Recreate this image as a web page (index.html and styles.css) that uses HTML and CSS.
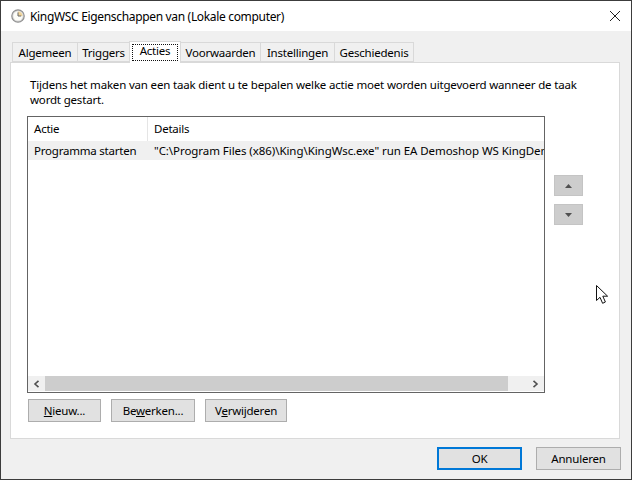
FILE: index.html
```html
<!DOCTYPE html>
<html lang="nl">
<head>
<meta charset="utf-8">
<title>KingWSC Eigenschappen</title>
<link rel="stylesheet" href="styles.css">
</head>
<body>
<div class="window">
  <header class="titlebar">
    <svg class="clock" width="14" height="14" viewBox="0 0 14 14"><circle cx="7" cy="7" r="6.2" fill="#dcdcdc" stroke="#8f8f8f" stroke-width="1.2"/><circle cx="7" cy="7" r="4.6" fill="#fdfdf8"/><path d="M7 2.4A4.6 4.6 0 0 1 11.6 7H7Z" fill="#f0d49a"/><path d="M7 3.4V7h3.2" fill="none" stroke="#666" stroke-width="1"/></svg>
    <span class="title">KingWSC Eigenschappen van (Lokale computer)</span>
    <svg class="close" width="10" height="10" viewBox="0 0 10 10"><path d="M0 0L10 10M10 0L0 10" stroke="#222" stroke-width="1" fill="none"/></svg>
  </header>
  <main class="content">
    <nav class="tabs">
      <span class="tab t1">Algemeen</span>
      <span class="tab t2">Triggers</span>
      <span class="tab active t3"><span class="focus">Acties</span></span>
      <span class="tab t4">Voorwaarden</span>
      <span class="tab t5">Instellingen</span>
      <span class="tab t6">Geschiedenis</span>
    </nav>
    <section class="panel">
      <p class="intro">Tijdens het maken van een taak dient u te bepalen welke actie moet worden uitgevoerd wanneer de taak wordt gestart.</p>
      <div class="listrow">
        <div class="list">
          <div class="listhead">
            <span class="col1">Actie</span>
            <span class="col2">Details</span>
          </div>
          <div class="listitem">
            <span class="col1">Programma starten</span>
            <span class="col2 path">"C:\Program Files (x86)\King\KingWsc.exe" run EA Demoshop WS KingDemo</span>
          </div>
          <div class="listfill"></div>
          <div class="hscroll">
            <span class="arrow"><svg width="7" height="8" viewBox="0 0 7 8"><path d="M5.5 .8L2 4l3.5 3.2" fill="none" stroke="#505050" stroke-width="1.6"/></svg></span>
            <span class="thumb"></span>
            <span class="arrow end"><svg width="7" height="8" viewBox="0 0 7 8"><path d="M1.5 .8L5 4L1.5 7.2" fill="none" stroke="#505050" stroke-width="1.6"/></svg></span>
          </div>
        </div>
        <div class="updown">
          <button class="btn small"><svg width="7" height="4" viewBox="0 0 7 4"><path d="M3.5 0L7 4H0Z" fill="#505050"/></svg></button>
          <button class="btn small"><svg width="7" height="4" viewBox="0 0 7 4"><path d="M0 0H7L3.5 4Z" fill="#505050"/></svg></button>
        </div>
      </div>
      <div class="actions">
        <button class="btn b1"><u>N</u>ieuw...</button>
        <button class="btn b2">Be<u>w</u>erken...</button>
        <button class="btn b3">V<u>e</u>rwijderen</button>
      </div>
    </section>
    <footer class="footer">
      <button class="btn wide primary">OK</button>
      <button class="btn wide">Annuleren</button>
    </footer>
    <svg class="cursor" width="14" height="20" viewBox="0 0 14 20"><path d="M.5.5V15.5L4 12.3L6.6 18.3L9.4 17L6.8 11.2H11.6Z" fill="#fff" stroke="#111" stroke-width="1"/></svg>
  </main>
</div>
</body>
</html>
```
FILE: styles.css
```css
* { box-sizing: border-box; }
html, body { margin: 0; padding: 0; }
body {
  width: 632px;
  height: 480px;
  overflow: hidden;
  font-family: "Noto Sans", "Open Sans", sans-serif;
  font-size: 11.5px;
  letter-spacing: -0.22px;
  color: #000;
}
.window {
  width: 632px;
  height: 480px;
  border: 1px solid #3c3c3c;
  display: flex;
  flex-direction: column;
  background: #f0f0f0;
}
.titlebar {
  height: 30px;
  flex: none;
  background: #fff;
  display: flex;
  align-items: center;
  padding: 0 11px 0 10px;
}
.clock { flex: none; margin-right: 5px; }
.title { flex: 1; font-size: 12px; letter-spacing: -0.33px; white-space: nowrap; }
.content {
  position: relative;
  flex: 1;
  padding: 11px 10px 0 9px;
  display: flex;
  flex-direction: column;
}
.tabs {
  display: flex;
  align-items: flex-end;
  height: 21px;
  padding-left: 2px;
  position: relative;
  z-index: 1;
  margin-bottom: -1px;
}
.tab {
  height: 20px;
  background: #f0f0f0;
  border: 1px solid #d9d9d9;
  border-left: 0;
  text-align: center;
  line-height: 20px;
  white-space: nowrap;
  margin-bottom: 1px;
}
.t1 { width: 66px; border-left: 1px solid #d9d9d9; }
.t2 { width: 52px; }
.t3 { width: 51px; }
.t4 { width: 80px; }
.t5 { width: 74px; }
.t6 { width: 79px; }
.active {
  height: 22px;
  margin-bottom: 0;
  background: #fff;
  border-bottom: 0;
  border-left: 1px solid #d9d9d9;
  margin-left: -1px;
  width: 52px;
  padding: 2px;
  line-height: 15px;
}
.focus {
  display: block;
  height: 17px;
  border: 1px dotted #111;
  line-height: 12px;
}
.panel {
  width: 610px;
  height: 377px;
  background: #fff;
  border: 1px solid #d9d9d9;
  padding: 14px 16px 0 16px;
  flex: none;
}
.intro {
  margin: 0 0 9px 3px;
  width: 555px;
  line-height: 15px;
  height: 30px;
  letter-spacing: -0.18px;
}
.listrow {
  display: flex;
  align-items: flex-start;
}
.list {
  width: 518px;
  height: 277px;
  border: 1px solid #646464;
  display: flex;
  flex-direction: column;
  overflow: hidden;
  flex: none;
}
.listhead, .listitem {
  display: flex;
  white-space: nowrap;
  flex: none;
}
.listhead { height: 24px; line-height: 24px; }
.listitem { height: 19px; line-height: 19px; background: #f0f0f0; }
.col1 { width: 120px; padding-left: 6px; flex: none; }
.col2 { flex: 1; padding-left: 6px; overflow: hidden; }
.path { letter-spacing: -0.06px; }
.listhead .col1 { border-right: 1px solid #e5e5e5; }
.listfill { flex: 1; }
.hscroll {
  height: 15px;
  flex: none;
  display: flex;
  background: #f0f0f0;
  margin-bottom: 1px;
}
.arrow {
  width: 17px;
  flex: none;
  display: flex;
  align-items: center;
  justify-content: center;
}
.arrow.end { width: 36px; padding-left: 19px; }
.thumb { flex: 1; background: #cdcdcd; }
.updown {
  display: flex;
  flex-direction: column;
  gap: 8px;
  margin: 59px 0 0 9px;
}
.btn {
  font: inherit;
  letter-spacing: inherit;
  color: #000;
  background: #e1e1e1;
  border: 1px solid #adadad;
  padding: 0;
  height: 23px;
  white-space: nowrap;
  display: block;
}
.btn u { text-underline-offset: 1px; }
.small {
  width: 29px;
  height: 21px;
  background: #cdcdcd;
  border-color: #c4c4c4;
  display: flex;
  align-items: center;
  justify-content: center;
}
.actions {
  display: flex;
  gap: 10px;
  margin: 6px 0 0 1px;
}
.b1 { width: 73px; }
.b2 { width: 84px; }
.b3 { width: 82px; }
.footer {
  display: flex;
  justify-content: flex-end;
  gap: 14px;
  margin-top: 8px;
  margin-right: 0;
}
.wide { width: 85px; }
.primary { border: 2px solid #0078d7; }
.cursor {
  position: absolute;
  left: 595px;
  top: 254px;
}
```
